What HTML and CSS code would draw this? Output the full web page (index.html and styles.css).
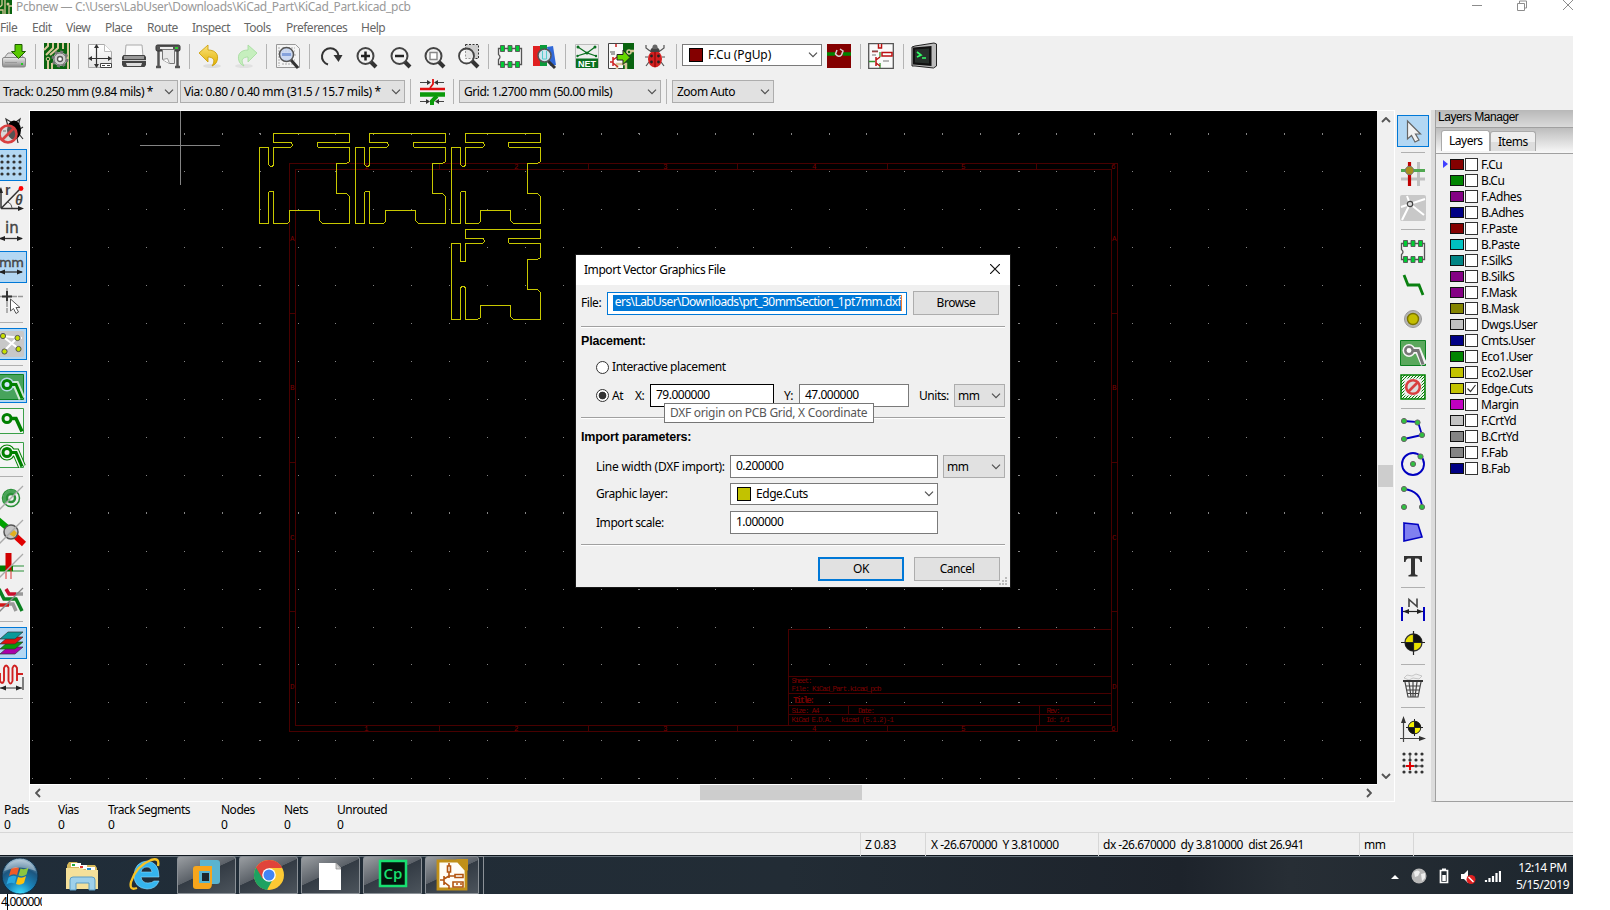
FILE: index.html
```html
<!DOCTYPE html>
<html lang="en">
<head>
<meta charset="utf-8">
<title>Pcbnew</title>
<link rel="stylesheet" href="styles.css">
</head>
<body>
<svg class="defs" aria-hidden="true">
  <defs>
    <linearGradient id="metal" x1="0" y1="0" x2="0" y2="1"><stop offset="0" stop-color="#e8e8e8"/><stop offset="1" stop-color="#8a8a8a"/></linearGradient>
    <linearGradient id="sheen" x1="0" y1="0" x2="0" y2="1"><stop offset="0" stop-color="#fff"/><stop offset="1" stop-color="#e4e4e4"/></linearGradient>
    <linearGradient id="yel" x1="0" y1="0" x2="0" y2="1"><stop offset="0" stop-color="#fbe27a"/><stop offset="1" stop-color="#e0b000"/></linearGradient>
    <radialGradient id="orb" cx=".5" cy="1" r="1"><stop offset="0" stop-color="#3fe0ff"/><stop offset=".35" stop-color="#1a86bd"/><stop offset=".7" stop-color="#1c567f"/><stop offset="1" stop-color="#a9c3d4"/></radialGradient>
    <pattern id="hatch" width="3" height="3" patternUnits="userSpaceOnUse"><path d="M0 3L3 0" stroke="#008000"/></pattern>
    <path id="board" d="M259.5 147.5H268.5V164.500L270.500 166.500H272.500L273.500 164.500V147.500H290.500L292.500 145.500L291.500 142.500H273.500V133.500H349.500V142.500H317.500V146L318.500 147.500H349.500V161.500L346.500 163.500H336.500V193.500H346.500L349.500 196.500V223.500H322.500L319.500 220.500V210.500H289.500V221.500L287.500 223.500H273.500V191.500H269.500L268.500 193V223.500H259.500Z"/>
    <symbol id="glass" viewBox="0 0 26 26"><path d="M16 18l6 6" stroke="#333" stroke-width="4"/><circle cx="11.500" cy="13" r="8" fill="#f2f2f2" stroke="#444" stroke-width="2"/></symbol>
    <symbol id="chev" viewBox="0 0 10 6"><path d="M1 .7L5 4.700L9 .7" fill="none" stroke="#505050" stroke-width="1.200"/></symbol>
    <symbol id="fp" viewBox="0 0 26 26"><path d="M1.500 5.500h23v16h-23v-5q3-2.500 0-5z" fill="#f4f4f4" stroke="#555" stroke-width="1.300"/><g fill="#0c3" stroke="#555" stroke-width=".9"><path d="M3.500 2.500h4v6h-4zM11 2.500h4v6h-4zM18.500 2.500h4v6h-4zM3.500 18.500h4v6h-4zM11 18.500h4v6h-4zM18.500 18.500h4v6h-4z"/></g></symbol>
  </defs>
</svg>

<div class="app">
  <header class="titlebar">
    <svg class="appicon" viewBox="0 0 12 14"><path fill="#0a6410" d="M0 0h12v14H0z"/><path d="M2 0v5l-2 2M5 0v14M9 14V6h3M0 10h3v4" fill="none" stroke="#d8c89a" stroke-width="1.300"/><circle cx="8" cy="4" r="1.500" fill="#d8c89a"/></svg>
    <span class="caption">Pcbnew — C:\Users\LabUser\Downloads\KiCad_Part\KiCad_Part.kicad_pcb</span>
    <svg class="winctl" viewBox="0 0 104 14"><g fill="none" stroke="#8c8c8c"><path d="M0 5.500h10M45.500 3.500h7v7h-7zM47.500 3v-2h7v7h-2M91 0l10 10M101 0L91 10"/></g></svg>
  </header>
  <nav class="menubar"><span>File</span><span>Edit</span><span>View</span><span>Place</span><span>Route</span><span>Inspect</span><span>Tools</span><span>Preferences</span><span>Help</span></nav>

  <div class="toolbar">
    <i class="cell"><svg viewBox="0 0 26 26"><path d="M3 15l4-5h12l4 5z" fill="#ddd" stroke="#888"/><rect x="1.500" y="14.500" width="23" height="9.500" rx="1.500" fill="url(#metal)" stroke="#888"/><path d="M4 19.500h12" stroke="#999"/><path d="M20 20h2v2h-2z" fill="#2c2"/><path d="M14 1.500h7v7h3.500l-7 7-7-7H14z" fill="#58c800" stroke="#1c5a00"/></svg></i>
    <i class="sep"></i>
    <i class="cell"><svg viewBox="0 0 26 26"><path fill="#0a6410" d="M0 0h26v26H0z"/><g fill="none" stroke="#d8c89a" stroke-width="2"><path d="M4 0v3L0 7M9 0v5L2 12M14 0v5L6 12M19 0v6M24 0v26M4 17v9M8 20v6"/></g><circle cx="4" cy="16" r="1.800" fill="none" stroke="#d8c89a"/><circle cx="16" cy="16" r="7" fill="#bbb" stroke="#777" stroke-dasharray="2.800 2.700" stroke-width="3"/><circle cx="16" cy="16" r="6" fill="#d0d0d0" stroke="#777"/><circle cx="16" cy="16" r="2.500" fill="#fff" stroke="#555" stroke-width="1.300"/></svg></i>
    <i class="sep"></i>
    <i class="cell"><svg viewBox="0 0 26 26"><path d="M1.500 1.500h16l7 7v16h-23z" fill="url(#sheen)" stroke="#aaa"/><path d="M17.500 1.500v7h7" fill="#fff" stroke="#bbb"/><path d="M2 15.500h22M9.500 2v22" stroke="#333" stroke-width="1.200"/><path d="M9.500 1l-2.500 4h5zM9.500 25l-2.500-4h5zM1 15.500l4-2.500v5zM25 15.500l-4-2.500v5z" fill="#333"/><path d="M13.500 20.500h11v4h-11z" fill="#fff" stroke="#444"/><path d="M15 22.500h3m2 0h3" stroke="#444"/></svg></i>
    <i class="cell"><svg viewBox="0 0 26 26"><path d="M5 2h16l1 11H4z" fill="#fafafa" stroke="#aaa"/><path d="M2.500 12h21l1.500 2v8l-1.500 2h-21L1 22v-8z" fill="#444"/><path d="M3 13h20v3H3z" fill="#999"/><path d="M5 20h16l-1 3H6z" fill="#ddd"/><path d="M1 17.500h24" stroke="#ccc"/></svg></i>
    <i class="cell"><svg viewBox="0 0 26 26"><path d="M3.500 7v17M22.500 7v17M1 24h5M20 24h5" stroke="#555" stroke-width="2.500"/><rect x="1" y="2" width="24" height="6" rx="1.500" fill="#555" stroke="#333"/><path d="M5 5h13" stroke="#eee" stroke-width="2"/><path d="M20 4h3v2h-3z" fill="#3c3"/><path d="M7.500 6.500h12v14h-5l-7-4z" fill="#e8e8e8" stroke="#777"/><path d="M7.500 16.500l5-1 2 5" fill="#fff" stroke="#999"/></svg></i>
    <i class="sep"></i>
    <i class="cell"><svg viewBox="0 0 26 26"><ellipse cx="14" cy="23" rx="9" ry="2" fill="#ddd"/><path d="M1 10l9-8v5c8 0 11 5 9 11-1 3-3 4-5 5 4-6 1-9-4-9v5z" fill="url(#yel)" stroke="#c99a00" stroke-width=".8"/></svg></i>
    <i class="cell faded"><svg viewBox="0 0 26 26"><ellipse cx="12" cy="23" rx="9" ry="2" fill="#ddd"/><path d="M25 10l-9-8v5C8 7 5 12 7 18c1 3 3 4 5 5-4-6-1-9 4-9v5z" fill="#b8efae" stroke="#8ad480" stroke-width=".8"/></svg></i>
    <i class="sep"></i>
    <i class="cell"><svg viewBox="0 0 26 26"><path d="M1.500 1.500h19l4 4v19h-23z" fill="#f4f4f4" stroke="#999"/><path d="M4 4v19M7 5h13M7 8h13M7 12h14M7 17h13M7 21h12" stroke="#aaa" stroke-dasharray="2 1"/><path d="M16 17l7 8" stroke="#333" stroke-width="3"/><circle cx="11.500" cy="11.500" r="7" fill="#c4d4f0" fill-opacity=".85" stroke="#555" stroke-width="1.500"/><path d="M7 10h9v3H7z" fill="#85a2dc"/></svg></i>
    <i class="sep"></i>
    <i class="cell"><svg viewBox="0 0 26 26"><path d="M10 21.500a8.300 8.300 0 1 1 10.500-9" fill="none" stroke="#333" stroke-width="2"/><path d="M15.500 12h9l-4 7z" fill="#333"/></svg></i>
    <i class="cell"><svg viewBox="0 0 26 26"><g transform="translate(2)"><use href="#glass"/><path d="M7 13h9M11.500 8.500v9" stroke="#222" stroke-width="2.500"/></g></svg></i>
    <i class="cell"><svg viewBox="0 0 26 26"><g transform="translate(2)"><use href="#glass"/><path d="M7 13h9" stroke="#222" stroke-width="2.500"/></g></svg></i>
    <i class="cell"><svg viewBox="0 0 26 26"><g transform="translate(2)"><use href="#glass"/><path d="M8 9.500h7v7H8z" fill="#fff" stroke="#888" stroke-width="1.400"/></g></svg></i>
    <i class="cell"><svg viewBox="0 0 26 26"><path d="M11.500 1.500h13v14h-13z" fill="#ccc" stroke="#333" stroke-dasharray="2 1.500"/><g transform="translate(2)"><path d="M16 18l6 6" stroke="#333" stroke-width="4"/><circle cx="10.500" cy="13" r="7.500" fill="#fff" fill-opacity=".5" stroke="#444" stroke-width="1.800"/></g></svg></i>
    <i class="sep"></i>
    <i class="cell"><svg viewBox="0 0 26 26"><use href="#fp"/></svg></i>
    <i class="cell"><svg viewBox="0 0 26 26"><path d="M2 3h7v20H2z" fill="#e02020"/><path d="M9 2h7v21H9z" fill="#0a9a3a"/><path d="M16 4l6-1 3 19-6 1z" fill="#3068d8"/><path d="M17 18l7 7" stroke="#333" stroke-width="3"/><circle cx="13.500" cy="12.500" r="6.500" fill="#cfe4ee" stroke="#555" stroke-width="1.500"/><path d="M11.500 8v8h4V8" fill="none" stroke="#5cc"/></svg></i>
    <i class="sep"></i>
    <i class="cell"><svg viewBox="0 0 26 26"><path d="M1.500 1.500h23v23h-23z" fill="#eee" stroke="#bbb"/><path d="M4 4l9 6 8-6M3 13l10-3 9 3" fill="none" stroke="#0a7020" stroke-width="1.200"/><g fill="#0a7020"><circle cx="4" cy="4" r="1.500"/><circle cx="21" cy="4" r="1.500"/><circle cx="13" cy="10" r="1.500"/><circle cx="3.500" cy="13" r="1.200"/><circle cx="22" cy="13" r="1.200"/><path d="M2 15.500h22V25H2z"/></g><text x="13" y="23.500" text-anchor="middle" class="t-net">NET</text></svg></i>
    <i class="cell"><svg viewBox="0 0 26 26"><path d="M.5.5h25v25H.5z" fill="#fafafa" stroke="#444"/><path d="M15 0h11v26H15z" fill="#0a6410"/><path d="M9 26v-5h9v5M26 8h-3" fill="none" stroke="#d8c89a" stroke-width="2.500"/><circle cx="21" cy="9" r="2" fill="#0a6410" stroke="#d8c89a" stroke-width="1.500"/><path d="M8 1v3M2 19h3M5 14v9M5 17l4-3M5 20l5 4" fill="none" stroke="#c22" stroke-width="1.500"/><path d="M2 9h5M3 11h4" stroke="#555"/><path d="M9 11.500h6V7l7 7.500-7 7V17H9z" fill="#66d800" stroke="#222"/></svg></i>
    <i class="cell"><svg viewBox="0 0 26 26"><g stroke="#555" stroke-width="1.200" fill="none"><path d="M8 8L4 5V2M18 8l4-3V2M6 14H3M20 14h3M7 19l-3 4M19 19l3 4"/></g><ellipse cx="13" cy="16" rx="7" ry="8.500" fill="#d42020"/><path d="M8 9a5 5 0 0 1 10 0z" fill="#444"/><path d="M10.500 4a2.500 2.500 0 0 1 5 0v2h-5z" fill="#666"/><path d="M13 9v15" stroke="#700"/><g fill="#222"><circle cx="9.500" cy="13" r="1.400"/><circle cx="16.500" cy="13" r="1.400"/><circle cx="9.500" cy="19" r="1.400"/><circle cx="16.500" cy="19" r="1.400"/></g></svg></i>
    <i class="sep"></i>
    <div class="combo layer-combo"><b class="chip fcu"></b><span>F.Cu (PgUp)</span><svg class="chev"><use href="#chev"/></svg></div>
    <i class="cell"><svg viewBox="0 0 26 26"><path fill="#840000" d="M1 1h24v24H1z"/><path d="M1 11h8M17 11h8" stroke="#008400" stroke-width="3.500"/><path d="M11 7l-1.500 4q3 4 6 1l1.500-4-3-2" fill="none" stroke="#d8d0d0" stroke-width="1.500"/></svg></i>
    <i class="sep"></i>
    <i class="cell shift"><svg viewBox="0 0 26 26"><path d="M.7.7h24.600v24.600H.7z" fill="#fafafa" stroke="#555" stroke-width="1.300"/><path d="M12 1v4M12 9v5M12 20v5M1 18.500h6" stroke="#393" stroke-width="1.300"/><g fill="#fff" stroke="#b11" stroke-width="1.500"><path d="M10.500 1v4h3V1M14 9.500h10v3.500H14z"/></g><path d="M8 14v9M8 17l4-3M8 20l4 3M4 8.500h6" stroke="#b11" stroke-width="1.500"/><path d="M4 8h6M15 18h6M4 12h4" stroke="#777"/></svg></i>
    <i class="sep"></i>
    <i class="cell shift"><svg viewBox="0 0 26 26"><path d="M4 3l19-3 2.500 1v22l-3 2L4 23H1V4z" fill="#bbb" stroke="#222"/><path d="M2 4.500L20.500 3v20L2 21.500z" fill="#111"/><path d="M4 6.500l14-1v15l-14-1z" fill="#28302c"/><path d="M6 9l4 3-4 2" fill="none" stroke="#3f6" stroke-width="1.700"/><path d="M11 15h4" stroke="#3f6" stroke-width="1.500"/></svg></i>
  </div>

  <div class="toolbar second">
    <div class="combo gray c-track"><span>Track: 0.250 mm (9.84 mils) *</span><svg class="chev"><use href="#chev"/></svg></div>
    <div class="combo gray c-via"><span>Via: 0.80 / 0.40 mm (31.5 / 15.7 mils) *</span><svg class="chev"><use href="#chev"/></svg></div>
    <i class="sep"></i>
    <i class="cell"><svg viewBox="0 0 26 26"><path d="M1 10h25" stroke="#e01010" stroke-width="2.500"/><path d="M1 15.500h25" stroke="#0a9a0a" stroke-width="4.500"/><path d="M14 0v5l-3 4" stroke="#e01010" stroke-width="1.800" fill="none"/><path d="M13 26v-4l5-5" stroke="#0a9a0a" stroke-width="4" fill="none"/><path d="M1 3.500h9M25 3.500h-9M1 22.500h8M25 22.500h-8" stroke="#444"/><path d="M12 3.500L8 1v5zM15 3.500L19 1v5zM11 22.500L7 20v5zM16 22.500l4-2.500v5z" fill="#333"/></svg></i>
    <i class="sep"></i>
    <div class="combo gray c-grid"><span>Grid: 1.2700 mm (50.00 mils)</span><svg class="chev"><use href="#chev"/></svg></div>
    <i class="sep"></i>
    <div class="combo gray c-zoom"><span>Zoom Auto</span><svg class="chev"><use href="#chev"/></svg></div>
  </div>

  <main class="work">
    <aside class="vbar left">
      <i class="cell"><svg viewBox="0 0 26 26"><path d="M10 8L8 1l5 3M20 8l2-7-4 3M8 13H5M22 11l3-2M21 16l4 5M19 20l1 5" fill="none" stroke="#333" stroke-width="1.200"/><ellipse cx="16" cy="12" rx="7" ry="9.500" fill="#000"/><circle cx="10" cy="16" r="8.500" fill="#bbb" fill-opacity=".45" stroke="#d84040" stroke-width="2.600"/><path d="M4 22L16 10" stroke="#d84040" stroke-width="2.600"/></svg></i>
      <i class="cell on"><svg viewBox="0 0 26 26"><path d="M4 4h19M4 10h19M4 16h19M4 22h19" fill="none" stroke="#333" stroke-width="3.200" stroke-linecap="round" stroke-dasharray="0 6"/></svg></i>
      <i class="cell"><svg viewBox="0 0 26 26"><path d="M3 22.500h18M3 22.500V4M3 22.500L22 3" stroke="#333" stroke-width="1.500"/><path d="M3 1L0 7h5zM26 22.500l-6-2.500v5z" fill="#222"/><circle cx="23" cy="2.500" r="2.400" fill="red"/><path d="M10 16q4 2 4 6" fill="none" stroke="#555"/><text x="7" y="9" class="t-pol">r</text><text x="17" y="19" class="t-pol it">θ</text></svg></i>
      <i class="cell"><svg viewBox="0 0 26 26"><text x="7" y="13" class="t-unit">in</text><path d="M2 18.500h22" stroke="#333" stroke-width="1.300"/><path d="M25 18.500l-6-2.500v5zM1 18.500l6-2.500v5z" fill="#222"/></svg></i>
      <i class="cell on"><svg viewBox="0 0 26 26"><text x="1" y="13" class="t-unit mm">mm</text><path d="M2 18h22" stroke="#333" stroke-width="1.300"/><path d="M25 18l-6-2.500v5zM1 18l6-2.500v5z" fill="#222"/></svg></i>
      <i class="cell"><svg viewBox="0 0 26 26"><path d="M0 8.500h25M9 0v25" stroke="#999" stroke-width="1.500" stroke-dasharray="9 1"/><path d="M4 8.500h10M9 3v10" stroke="#333" stroke-width="2"/><path d="M12.500 11v12l3-2.500 2.500 5 2.500-1.500-2.500-4.500h4z" fill="#fff" stroke="#555"/></svg></i>
      <i class="sep"></i>
      <i class="cell on"><svg viewBox="0 0 26 26"><rect width="26" height="26" rx="2" fill="#c8c8c8"/><path d="M4 5l20 2M4 5l17 13M19 7L6 20" stroke="#fff" stroke-width="2.200"/><g fill="#c8e000" stroke="#555"><circle cx="5" cy="5" r="2.600"/><circle cx="19.500" cy="7" r="2.600"/><circle cx="6.500" cy="20.500" r="2.600"/><circle cx="20.500" cy="18" r="2.600"/></g></svg></i>
      <i class="sep"></i>
      <i class="cell on"><svg viewBox="0 0 26 26"><path d="M0 .5h25.500v25H0z" fill="#47a35c" stroke="#0a8020"/><path d="M9 10.500h9l6 14" fill="none" stroke="#fff" stroke-opacity=".75" stroke-width="7"/><circle cx="9" cy="10.500" r="7" fill="#b5d8e8"/><path d="M9 10.500h9l6 14" fill="none" stroke="#008000" stroke-width="3"/><circle cx="9" cy="10.500" r="4" fill="#cfe8ff" stroke="#008000" stroke-width="3"/></svg></i>
      <i class="cell"><svg viewBox="0 0 26 26"><path d="M0 .5h25.500v25H0" fill="#f4f4f4" stroke="#3aa048"/><path d="M9 10.500h9l6 13" fill="none" stroke="#008000" stroke-width="3.500"/><circle cx="9" cy="10.500" r="4" fill="#f4f4f4" stroke="#008000" stroke-width="3"/></svg></i>
      <i class="cell"><svg viewBox="0 0 26 26"><path d="M0 .5h25.500v25H0" fill="#f4f4f4" stroke="#3aa048"/><path d="M9 10.500h9l6 14" fill="none" stroke="#008000" stroke-width="8"/><circle cx="9" cy="10.500" r="7.500" fill="#f4f4f4" stroke="#008000" stroke-width="1.200"/><path d="M9 10.500h9l6 14" fill="none" stroke="#f4f4f4" stroke-width="6"/><path d="M9 10.500h9l6 14" fill="none" stroke="#008000" stroke-width="3.200"/><circle cx="9" cy="10.500" r="4" fill="#f4f4f4" stroke="#008000" stroke-width="3"/></svg></i>
      <i class="sep"></i>
      <i class="cell"><svg viewBox="0 0 26 26"><circle cx="13" cy="13" r="8.500" fill="#eee" stroke="#2a9038" stroke-width="1.500"/><path d="M7 19A8.500 8.500 0 0 1 19 7z" fill="#4aa458"/><circle cx="13" cy="13" r="4" fill="#eee" stroke="#2a9038" stroke-width="2.500"/><path d="M1 25L25 1" stroke="#aaa" stroke-width="1.300"/></svg></i>
      <i class="cell"><svg viewBox="0 0 26 26"><path d="M0 1l12 10" stroke="#00a000" stroke-width="6"/><path d="M13 13l13 12" stroke="#e00000" stroke-width="6"/><circle cx="13" cy="13" r="7" fill="#c4c4c4" stroke="#555" stroke-width="1.500"/><path d="M11 15l5-4 3 3-3 4z" fill="#e0b020"/><path d="M1 25L25 1" stroke="#aaa" stroke-width="1.300"/></svg></i>
      <i class="cell"><svg viewBox="0 0 26 26"><path d="M0 15.500h15" stroke="#008000" stroke-width="6"/><path d="M10.500 0v17" stroke="#d00000" stroke-width="6"/><path d="M15 13h11M15 18h11" stroke="#2a9038"/><path d="M8 17v9M13 17v9" stroke="#d33"/><path d="M1 25L25 1" stroke="#aaa" stroke-width="1.300"/></svg></i>
      <i class="cell"><svg viewBox="0 0 26 26"><path d="M8 2l3 5h7" fill="none" stroke="#c8102e" stroke-width="3.500"/><path d="M18 7h7M11 17h4l3 7" fill="none" stroke="#999" stroke-width="3.500"/><path d="M0 18h11" stroke="#d01818" stroke-width="3.500"/><path d="M1 2l5 10h12l6 12" fill="none" stroke="#0a8020" stroke-width="3.500"/><path d="M1 25L25 1" stroke="#888" stroke-width="1.300"/></svg></i>
      <i class="sep"></i>
      <i class="cell on"><svg viewBox="0 0 26 26"><g stroke="#333" stroke-width=".7"><path d="M2 24l8-7h15l-8 7z" fill="#a0a"/><path d="M2 19l8-7h15l-8 7z" fill="#0a9a0a"/><path d="M2 14l8-7h15l-8 7z" fill="#e01010"/><path d="M2 9l8-7h15l-8 7z" fill="#0a9a9a"/></g></svg></i>
      <i class="cell"><svg viewBox="0 0 26 26"><path d="M0 10h2v7q2 4 4 0M6 17V4q2-5 4.500 0v13q2 5 4 0V4q2-5 4.500 0v13M19 10h6" fill="none" stroke="#d02020" stroke-width="1.900"/><path d="M2 24h22M25 13v13" stroke="#333" stroke-width="1.200"/><path d="M24 24l-6-2.500v5zM2 24l6-2.500v5z" fill="#222"/></svg></i>
      <i class="sep"></i>
    </aside>

    <section class="view">
      <svg class="pcb" viewBox="30 111 1347 673">
        <path class="dots" d="M32 133.500H1377M32 171.500H1377M32 209.500H1377M32 247.500H1377M32 285.500H1377M32 323.500H1377M32 361.500H1377M32 399.500H1377M32 437.500H1377M32 475.500H1377M32 513.500H1377M32 551.500H1377M32 589.500H1377M32 627.500H1377M32 664.500H1377M32 702.500H1377M32 740.500H1377M32 778.500H1377"/>
        <path class="dots ten" d="M259 133.500H1377M259 171.500H1377M259 209.500H1377M259 247.500H1377M259 285.500H1377M259 323.500H1377M259 361.500H1377M259 399.500H1377M259 437.500H1377M259 475.500H1377M259 513.500H1377M259 551.500H1377M259 589.500H1377M259 627.500H1377M259 664.500H1377M259 702.500H1377M259 740.500H1377M259 778.500H1377"/>
        <path class="dots" d="M32 134.500H1377M32 512.500H1377"/>
        <g class="frame">
          <path d="M289.500 163.500H1117.500V731.500H289.500ZM295.500 169.500H1111.500V725.500H295.500Z"/>
          <path d="M439.500 163v6M588.500 163v6M737.500 163v6M887.500 163v6M1036.500 163v6M439.500 725v6M588.500 725v6M737.500 725v6M887.500 725v6M1036.500 725v6M289 313.500h6M289 462.500h6M289 611.500h6M1111 313.500h6M1111 462.500h6M1111 611.500h6"/>
          <path d="M788.500 725V629.500H1111M788 676.500h323M788 693.500h323M788 705.500h323M788 714.500h323M848.500 705v9M1039.500 705v20"/>
        </g>
        <g class="frametext">
          <text x="364" y="169">1</text><text x="514" y="169">2</text><text x="663" y="169">3</text><text x="812" y="169">4</text><text x="961" y="169">5</text><text x="1111" y="169">6</text>
          <text x="364" y="731">1</text><text x="514" y="731">2</text><text x="663" y="731">3</text><text x="812" y="731">4</text><text x="961" y="731">5</text><text x="1111" y="731">6</text>
          <text x="290" y="241">A</text><text x="290" y="390">B</text><text x="290" y="540">C</text><text x="290" y="689">D</text>
          <text x="1112" y="241">A</text><text x="1112" y="390">B</text><text x="1112" y="540">C</text><text x="1112" y="689">D</text>
          <text x="791.500" y="683" textLength="21">Sheet:</text>
          <text x="791.500" y="691" textLength="90">File: KiCad_Part.kicad_pcb</text>
          <text x="793" y="702.500" textLength="22" class="big">Title:</text>
          <text x="791.500" y="713" textLength="28">Size: A4</text><text x="858" y="713" textLength="17">Date:</text><text x="1046.500" y="713" textLength="14">Rev:</text>
          <text x="791.500" y="721.500" textLength="41">KiCad E.D.A.</text><text x="841" y="721.500" textLength="53">kicad (5.1.2)-1</text><text x="1046" y="721.500" textLength="24">Id: 1/1</text>
        </g>
        <g class="edge"><use href="#board"/><use href="#board" x="96"/><path d="M451.500 147.500H460.500V164.500L462.500 166.500H464.500L465.500 164.500V147.500H482.500L484.500 145.500L483.500 142.500H465.500V133.500H540.500V142.500H508.500V146L509.500 147.500H540.500V161.500L537.500 163.500H527.500V193.500H537.500L540.500 196.500V223.500H513.500L510.500 220.500V210.500H480.500V221.500L478.500 223.500H465.500V191.500H461.500L460.500 193V223.500H451.500Z"/><path transform="translate(0 96)" d="M451.500 147.500H460.500V165.500H465.500V147.500H482.500L484.500 145.500L483.500 142.500H465.500V133.500H540.500V142.500H508.500V146L509.500 147.500H540.500V161.500L537.500 163.500H527.500V193.500H537.500L540.500 196.500V223.500H513.500L510.500 220.500V209.500H480.500V221.500L477.500 223.500H465.500V191.500L463.500 190.500H461.500L460.500 192.500V223.500H451.500Z"/></g>
        <path class="cross" d="M180.500 111V185M140 145.500H220"/>
      </svg>
      <div class="vscroll"><svg viewBox="0 0 10 6"><path d="M1 5L5 1l4 4" /></svg><b class="thumb"></b><svg viewBox="0 0 10 6"><path d="M1 1l4 4 4-4"/></svg></div>
      <div class="hscroll"><svg viewBox="0 0 6 10"><path d="M5 1L1 5l4 4"/></svg><b class="thumb"></b><svg viewBox="0 0 6 10"><path d="M1 1l4 4-4 4"/></svg></div>
      <i class="corner"></i>
    </section>

    <aside class="vbar right">
      <i class="cell on"><svg viewBox="0 0 26 26"><path d="M7.500 3v18l4-3.500 3.500 6.500 4-2-3.500-6h5z" fill="#f2f2f2" stroke="#666" stroke-width="1.200"/></svg></i>
      <i class="sep"></i>
      <i class="cell"><svg viewBox="0 0 26 26"><path d="M18.500 1v24M1 18h24" stroke="#c0c0c0" stroke-width="3"/><path d="M1 9.500h24" stroke="#50a850" stroke-width="3"/><path d="M9.500 1v24" stroke="#c00000" stroke-width="3.200"/><circle cx="9.500" cy="9.500" r="4.200" fill="#a89020" stroke="#777"/></svg></i>
      <i class="cell"><svg viewBox="0 0 26 26"><rect width="26" height="26" rx="2" fill="#c8c8c8"/><path d="M7 1l3 8 15-5M10 9L1 12M10 9L2 25M10 9l14 11" stroke="#fff" stroke-width="2" fill="none"/><circle cx="10" cy="9" r="2.700" fill="#ddd" stroke="#444" stroke-width="1.200"/></svg></i>
      <i class="sep"></i>
      <i class="cell"><svg viewBox="0 0 26 26"><use href="#fp"/></svg></i>
      <i class="cell"><svg viewBox="0 0 26 26"><path d="M4 3l4 10h11l4 10" fill="none" stroke="#0a8010" stroke-width="2.800"/></svg></i>
      <i class="cell"><svg viewBox="0 0 26 26"><circle cx="13" cy="13" r="8.500" fill="#b4b4b4" stroke="#999"/><circle cx="13" cy="13" r="5.500" fill="#c4be00" stroke="#7a7400" stroke-width="1.400"/></svg></i>
      <i class="cell"><svg viewBox="0 0 26 26"><path d="M.5.5h25v25H.5z" fill="#5aa85c" stroke="#0a8020"/><path d="M9 10.500h9l6 14" fill="none" stroke="#f4f4f4" stroke-width="6.500"/><circle cx="9" cy="10.500" r="6.500" fill="#f4f4f4"/><path d="M9 10.500h9l5 14" fill="none" stroke="#777" stroke-width="3"/><circle cx="9" cy="10.500" r="3.700" fill="#fff" stroke="#777" stroke-width="2.500"/></svg></i>
      <i class="cell"><svg viewBox="0 0 26 26"><path d="M1 1h24v24H1z" fill="url(#hatch)" stroke="#008000" stroke-width="1.500"/><path d="M4.500 4.500h17v17h-17z" fill="#f0f0f0"/><circle cx="13" cy="13" r="6.800" fill="#ddd" stroke="#d84040" stroke-width="2.600"/><path d="M8.500 17.500l9-9" stroke="#d84040" stroke-width="2.600"/></svg></i>
      <i class="sep"></i>
      <i class="cell"><svg viewBox="0 0 26 26"><path d="M4 4l14 1 4 13-18 4" fill="none" stroke="#0000c0" stroke-width="1.800"/><g class="node"><circle cx="4" cy="4" r="2.600"/><circle cx="17.500" cy="5.500" r="2.600"/><circle cx="22" cy="18" r="2.600"/><circle cx="4" cy="22" r="2.600"/></g></svg></i>
      <i class="cell"><svg viewBox="0 0 26 26"><circle cx="13" cy="13" r="11" fill="none" stroke="#0000c0" stroke-width="1.900"/><g class="node"><circle cx="13" cy="13" r="2.600"/><circle cx="20.500" cy="5.500" r="2.600"/></g></svg></i>
      <i class="cell"><svg viewBox="0 0 26 26"><path d="M4 4q17 2 18 18" fill="none" stroke="#0000c0" stroke-width="1.800"/><g class="node"><circle cx="4" cy="4" r="2.600"/><circle cx="22" cy="22" r="2.600"/><circle cx="4" cy="22" r="2.600"/></g></svg></i>
      <i class="cell"><svg viewBox="0 0 26 26"><path d="M4 4l14 1.500 4 12.500L4 22z" fill="#8080f0" stroke="#0000c0" stroke-width="1.600"/></svg></i>
      <i class="cell"><svg viewBox="0 0 26 26"><path d="M4 3h18v6h-1.500q-.5-3.500-3-3.500h-2.500v15q0 1.500 2.500 1.500v1.500h-9V22q2.500 0 2.500-1.500v-15H8.500q-2.500 0-3 3.500H4z" fill="#333"/></svg></i>
      <i class="sep"></i>
      <i class="cell"><svg viewBox="0 0 26 26"><path d="M2 11v14M24 11v14" stroke="#0000c0" stroke-width="2"/><path d="M3 15.500h20" stroke="#222" stroke-width="1.200"/><path d="M3 15.500l6-2.500v5zM23 15.500l-6-2.500v5z" fill="#222"/><path d="M9 11V3.500l8 7V2.500" fill="none" stroke="#444" stroke-width="1.600"/></svg></i>
      <i class="cell"><svg viewBox="0 0 26 26"><circle cx="13.500" cy="12.500" r="8.500" fill="#e8e000" stroke="#333" stroke-width="1.300"/><path d="M13.500 12.500V4a8.500 8.500 0 0 1 8.500 8.500zM13.500 12.500V21A8.500 8.500 0 0 1 5 12.500z" fill="#111"/><path d="M1 12.500h24M13.500 1v24" stroke="#222" stroke-width="1.200"/></svg></i>
      <i class="sep"></i>
      <i class="cell"><svg viewBox="0 0 26 26"><path d="M4 5l3-3 5 1 4-2 6 2-3 3-6-1-4 2z" fill="#eee" stroke="#bbb" stroke-width=".8"/><path d="M3 8h20" stroke="#333" stroke-width="2"/><path d="M5 9l3 15h10l3-15M9 9l2 15M13 9v15M17 9l-2 15M5.500 13h15M6 17h14M7 20.500h12" fill="none" stroke="#444" stroke-width="1.200"/></svg></i>
      <i class="sep"></i>
      <i class="cell"><svg viewBox="0 0 26 26"><path d="M3.500 26V3M0 22.500h22" stroke="#444" stroke-width="1.200"/><path d="M3.500 0L1 7h5zM26 22.500l-7-2.500v5z" fill="#333"/><circle cx="14.500" cy="11.500" r="6.300" fill="#f4f000" stroke="#222"/><path d="M14.500 11.500V5.200a6.300 6.300 0 0 1 6.300 6.300zM14.500 11.500v6.300a6.300 6.300 0 0 1-6.300-6.300z" fill="#111"/><path d="M6 11.500h17M14.500 3v17" stroke="#222"/></svg></i>
      <i class="cell"><svg viewBox="0 0 26 26"><path d="M4 4h19M4 10h19M4 16h19M4 22h19" stroke="#333" stroke-width="3.200" stroke-linecap="round" stroke-dasharray="0 6"/><path d="M10 4v12h12" fill="none" stroke="#444" stroke-width="1"/><path d="M6 16h8M10 12v8" stroke="#e00000" stroke-width="2"/></svg></i>
    </aside>

    <aside class="manager">
      <h2>Layers Manager</h2>
      <div class="tabs"><span class="tab active">Layers</span><span class="tab">Items</span></div>
      <ul>
        <li class="current"><b class="red"></b><i></i>F.Cu</li>
        <li><b class="green"></b><i></i>B.Cu</li>
        <li><b class="purple"></b><i></i>F.Adhes</li>
        <li><b class="navy"></b><i></i>B.Adhes</li>
        <li><b class="red"></b><i></i>F.Paste</li>
        <li><b class="cyan"></b><i></i>B.Paste</li>
        <li><b class="teal"></b><i></i>F.SilkS</li>
        <li><b class="purple"></b><i></i>B.SilkS</li>
        <li><b class="purple"></b><i></i>F.Mask</li>
        <li><b class="olive"></b><i></i>B.Mask</li>
        <li><b class="silver"></b><i></i>Dwgs.User</li>
        <li><b class="navy"></b><i></i>Cmts.User</li>
        <li><b class="green"></b><i></i>Eco1.User</li>
        <li><b class="yellow"></b><i></i>Eco2.User</li>
        <li><b class="yellow"></b><i><svg viewBox="0 0 11 11"><path d="M1.500 5.500l3 3 5-6.500"/></svg></i>Edge.Cuts</li>
        <li><b class="magenta"></b><i></i>Margin</li>
        <li><b class="silver"></b><i></i>F.CrtYd</li>
        <li><b class="gray"></b><i></i>B.CrtYd</li>
        <li><b class="gray"></b><i></i>F.Fab</li>
        <li><b class="navy"></b><i></i>B.Fab</li>
      </ul>
    </aside>
  </main>

  <section class="messages">
    <p>Pads<br>0</p><p>Vias<br>0</p><p>Track Segments<br>0</p><p>Nodes<br>0</p><p>Nets<br>0</p><p>Unrouted<br>0</p>
  </section>
  <footer class="status"><span></span><span>Z 0.83</span><span>X -26.670000&nbsp; Y 3.810000</span><span>dx -26.670000&nbsp; dy 3.810000&nbsp; dist 26.941</span><span>mm</span><span></span></footer>

  <div class="taskbar">
    <svg class="start" viewBox="0 0 40 39"><circle cx="20" cy="20" r="18" fill="url(#orb)" stroke="#0d2c44"/><path d="M11 13q4-3 8-1l-2 7q-4-2-8 1z" fill="#f05a28"/><path d="M20.500 12.500q4 2 8-1l-2 7q-4 3-8 1z" fill="#8cc63f"/><path d="M8.500 21.500q4-3 8-1l-2 7q-4-2-8 1z" fill="#29a8e0"/><path d="M18 21q4 2 8-1l-2 7q-4 3-8 1z" fill="#ffc20e"/><path d="M4 15a17 17 0 0 1 32 0q-16-7-32 0z" fill="#fff" opacity=".35"/></svg>
    <svg class="pin folder" viewBox="0 0 34 32"><path d="M2 5l2-3h8l2 3h16l2 3v20H2z" fill="#d6b85a"/><path d="M6 3h10v4H6z" fill="#fff"/><path d="M7 4h3v2H7z" fill="#2a4"/><path d="M14 5h8v4h-8z" fill="#fff"/><path d="M15 6h3v2h-3z" fill="#d33"/><path d="M21 7h9v4h-9z" fill="#fff"/><path d="M22 8h4v2h-4z" fill="#28c"/><path d="M1 8h16l2 2h14v19H1z" fill="#f4e09a"/><path d="M5 30V20q0-3 3-3h19q3 0 3 3v10h-6v-7H11v7z" fill="#9ed0ea" stroke="#5a9cc4"/></svg>
    <svg class="pin ie" viewBox="0 0 32 32"><path d="M30 19H12q1 6 7 6 4 0 6-2h5q-3 8-12 8Q5 30 5 17 6 4 18 3q12 1 12 16zM12 14h11q-1-5-5-5-5 0-6 5z" fill="#35b4ee" stroke="#8fdcff" stroke-width=".6"/><path d="M8 30Q0 33 2 24 7 8 22 2q9-3 7 6" fill="none" stroke="#f7c325" stroke-width="2.400"/></svg>
    <div class="task"><svg viewBox="0 0 32 32"><path d="M9 1h17q3 0 3 3v18q0 3-3 3H9z" fill="#5ab4d0"/><path d="M2 10q0-3 3-3h16v17q0 6-4 6H5q-3 0-3-3z" fill="#f7a51c"/><path d="M8 12h11v12H8z" fill="#5ab4d0"/><path d="M11 14h7v8h-7z" fill="#1d262c"/></svg></div>
    <div class="task"><svg viewBox="0 0 32 32"><circle cx="16" cy="16" r="15" fill="#fcc934"/><path d="M16 16L3 8.500A15 15 0 0 0 14 31l6-11z" fill="#1da261"/><path d="M16 16V9h13.300A15 15 0 0 0 3 8.500l6.500 11z" fill="#e0443a"/><circle cx="16" cy="16" r="6.800" fill="#fff"/><circle cx="16" cy="16" r="5.500" fill="#4285f4"/></svg></div>
    <div class="task"><svg viewBox="0 0 32 32"><path d="M4 4h17l5 5v22H4z" fill="#fff"/><path d="M21 4l5 6h-5z" fill="#ccc" stroke="#888" stroke-width=".7"/></svg></div>
    <div class="task"><svg viewBox="0 0 32 32"><path d="M3 2h26v25H3z" fill="#04140c" stroke="#17e070" stroke-width="2.500"/><text x="16" y="20" text-anchor="middle" class="t-cp">Cp</text></svg></div>
    <div class="task last"><svg viewBox="0 0 32 32"><path d="M2 2h20l8 9v19H2z" fill="#fffdf6" stroke="#c09018" stroke-width="2.800"/><path d="M20 0h12v12z" fill="#c09018"/><g fill="none" stroke="#b35410" stroke-width="1.600"><path d="M13 4v3M11.500 7h3v6h-3zM13 13v6M13 17h6M19 15.500h8v3h-8zM4 21h4M8 17v9M8 20l5-3M8 23l5 4v3M17 23h10v5H17zM20 25h2m2 0h2"/></g></svg></div>
    <i class="sliver"></i>
    <div class="tray">
      <svg viewBox="0 0 110 20"><path d="M0 13l4-4 4 4z" fill="#fff"/><circle cx="28" cy="10" r="7.500" fill="#b8b8b8"/><path d="M23 6q4-3 6 0l-2 4-3 1zM30 8l4-1v5l-3 3z" fill="#eee"/><path d="M49.500 4.500h7v12h-7z" fill="none" stroke="#fff" stroke-width="1.700"/><path d="M51 2.500h4v2h-4zM51.300 9h3.500v6h-3.500z" fill="#fff"/><path d="M70 8h3l4-4v13l-4-4h-3z" fill="#fff"/><circle cx="80" cy="13.500" r="4.500" fill="#e02020"/><path d="M77.500 11l5 5" stroke="#fff" stroke-width="1.500"/><path d="M95 16v-2M98.500 16v-4M102 16v-6M105.500 16V7M109 16V5" stroke="#fff" stroke-width="2.200"/></svg>
      <p>12:14 PM<br>5/15/2019</p>
    </div>
  </div>

  <section class="dialog">
    <header><span>Import Vector Graphics File</span><svg viewBox="0 0 10 10"><path d="M0 0l10 10M10 0L0 10" stroke="#111" stroke-width="1.200"/></svg></header>
    <div class="row r-file"><label>File:</label><div class="field focus"><mark><span>ers\LabUser\Downloads\prt_30mmSection_1pt7mm.dxf</span></mark></div><button>Browse</button></div>
    <hr>
    <h3>Placement:</h3>
    <div class="row r-inter"><i class="radio"></i><span>Interactive placement</span></div>
    <div class="row r-at"><i class="radio sel"></i><span class="at">At</span><label>X:</label><div class="field hot">79.000000</div><label class="y">Y:</label><div class="field yv">47.000000</div><label class="u">Units:</label><div class="combo gray"><span>mm</span><svg class="chev"><use href="#chev"/></svg></div></div>
    <hr class="h2">
    <h3 class="p2">Import parameters:</h3>
    <div class="row param"><label class="wide">Line width (DXF import):</label><div class="field">0.200000</div><div class="combo gray"><span>mm</span><svg class="chev"><use href="#chev"/></svg></div></div>
    <div class="row param g"><label>Graphic layer:</label><div class="combo"><b class="chip"></b><span>Edge.Cuts</span><svg class="chev"><use href="#chev"/></svg></div></div>
    <div class="row param s"><label>Import scale:</label><div class="field">1.000000</div></div>
    <hr class="h3">
    <div class="row actions"><button class="ok">OK</button><button>Cancel</button></div>
    <svg class="grip" viewBox="0 0 8 8"><path d="M6 0h2v2H6zM3 3h2v2H3zM6 3h2v2H6zM0 6h2v2H0zM3 6h2v2H3zM6 6h2v2H6z" fill="#bbb"/></svg>
    <div class="tooltip">DXF origin on PCB Grid, X Coordinate</div>
  </section>
</div>
<div class="stray">4.000000</div>
</body>
</html>
```
FILE: styles.css
```css
* { box-sizing: border-box; }
body { margin: 0; width: 1610px; height: 910px; overflow: hidden; background: #fff; font: 12px/15px "Noto Sans", "Open Sans", sans-serif; letter-spacing: -.5px; color: #000; white-space: nowrap; }
p, h2, h3, ul { margin: 0; padding: 0; }
i { font-style: normal; }
.defs { position: absolute; width: 0; height: 0; }
.app { position: relative; width: 1573px; height: 894px; background: #f0f0f0; }

.titlebar { display: flex; height: 18px; background: #fff; color: #999; line-height: 14px; }
.appicon { width: 12px; height: 14px; margin-right: 4px; }
.caption { flex: 1; letter-spacing: -.33px; }
.winctl { width: 104px; height: 14px; margin: 0 -3px 0 0; }
.menubar { display: grid; grid-template-columns: 32px 34px 39px 42px 45px 52px 42px 75px 40px; height: 18px; line-height: 19px; background: #fff; color: #666; }

.toolbar { display: flex; align-items: center; height: 40px; margin-left: -3px; }
.cell { display: grid; place-items: center; flex: 0 0 34px; height: 34px; }
.cell svg { width: 26px; height: 26px; overflow: visible; }
.cell.shift svg { margin-right: 2px; }
.faded { opacity: .75; }
.toolbar .sep { flex: 0 0 9px; height: 25px; background: linear-gradient(#b4b4b4, #b4b4b4) 4px 0 / 1px 100% no-repeat; }
.second { height: 34px; margin-left: 0; padding-bottom: 3px; }
.combo { display: flex; align-items: center; height: 23px; padding: 0 3px 0 4px; border: 1px solid #7a7a7a; background: #fff; }
.combo span { flex: 1; }
.combo.gray { border-color: #adadad; background: #e1e1e1; }
.chev { width: 10px; height: 6px; }
.layer-combo { width: 140px; height: 22px; margin: -3px 0 0 1px; padding: 0 3px 0 6px; letter-spacing: -.1px; }
.chip { width: 14px; height: 14px; margin-right: 5px; border: 1px solid #000; background: #c2c200; }
.chip.fcu { background: #840000; }
.c-track { width: 179px; margin-left: -1px; padding-left: 3px; letter-spacing: -.43px; }
.c-via { width: 225px; margin: 0 1px 0 2px; padding-left: 3px; letter-spacing: -.38px; }
.c-grid { width: 202px; margin: 0 1px; letter-spacing: -.45px; }
.c-zoom { width: 102px; margin-left: 1px; }

.work { display: grid; grid-template-columns: 29px 1366px 36px 142px; height: 692px; }
.vbar { padding-top: 4px; }
.vbar .cell { width: 32px; }
.vbar.left .cell { margin-left: -5px; }
.vbar.right .cell { margin-left: 2px; }
.vbar .sep { display: block; height: 9px; background: linear-gradient(#b0b0b0, #b0b0b0) 0 4px / 23px 1px no-repeat; }
.vbar.right .sep { margin-left: 6px; background-size: 24px 1px; }
.vbar .on { height: 32px; margin-top: 1px; margin-bottom: 1px; border: 1px solid #0078d7; background: #b3d7f3; }
.node circle { fill: #30c040; stroke: #666; stroke-width: 1; }
.view { display: grid; grid-template-columns: 1347px 17px; grid-template-rows: 673px 17px; border: 1px solid #fff; }
.pcb { width: 1347px; height: 673px; background: #000; }
.pcb path, .pcb use { fill: none; shape-rendering: crispEdges; }
.dots { stroke: #848484; stroke-dasharray: 1 36.930; }
.ten { stroke-dasharray: 2 377.300; }
.frame { stroke: #480000; }
.frametext { fill: #7c0000; font: 7.500px "Liberation Mono", monospace; letter-spacing: 0; }
.frametext .big { font-size: 9px; font-weight: bold; }
.edge { stroke: #c8c800; }
.cross { stroke: #848484; }
.vscroll, .hscroll { display: flex; align-items: center; justify-content: space-between; }
.vscroll { flex-direction: column; padding: 6px 0 5px; }
.vscroll svg { width: 10px; height: 6px; }
.hscroll { padding: 0 5px; border-top: 1px solid #fff; }
.hscroll svg { width: 6px; height: 10px; }
.view > div path { fill: none; stroke: #555; stroke-width: 1.900; }
.thumb { background: #cdcdcd; }
.vscroll .thumb { width: 15px; height: 22px; margin-top: 56px; }
.hscroll .thumb { width: 162px; height: 15px; margin: -1px 0 0 154px; }

.manager { border-left: 4px solid #dcdcdc; background: linear-gradient(#a0a0a0, #a0a0a0) 0 0 / 1px 100% no-repeat; border-bottom: 1px solid #a0a0a0; }
.manager h2 { height: 17px; margin-left: 1px; padding-left: 2px; font: 12px/15px "Liberation Sans", sans-serif; letter-spacing: -.45px; background: linear-gradient(#b8b8b8, #dadada); }
.tabs { display: flex; align-items: flex-end; height: 27px; margin-left: 1px; padding: 0 0 2px 5px; border-top: 1px solid #a0a0a0; border-bottom: 1px solid #a0a0a0; background: linear-gradient(#bdbdbd, #f8f8f8); }
.tab { height: 20px; padding: 2px 7px; border: 1px solid #aaa; border-bottom: 0; border-radius: 3px 3px 0 0; background: linear-gradient(#eee 50%, #ddd 50%); }
.tab.active { height: 21px; background: #fff; width: 49px; }
.manager ul { padding: 2px 0 0 8px; list-style: none; }
.manager li { display: flex; align-items: center; height: 16px; padding-left: 7px; letter-spacing: -.47px; }
.manager li.current { padding-left: 0; }
.current::before { content: ""; width: 0; margin-right: 2px; border: 4px solid transparent; border-left: 5px solid #4040ff; border-right: 0; }
.manager b { width: 14px; height: 11px; margin-right: 1px; border: 1px solid #111; }
.manager li i { width: 13px; height: 13px; margin-right: 3px; border: 1px solid #333; background: #fff; }
.manager li svg { display: block; width: 11px; height: 11px; fill: none; stroke: #333; stroke-width: 1.200; }
.red { background: #840000; } .green { background: #008400; } .purple { background: #840084; } .navy { background: #000084; }
.cyan { background: #00c2c2; } .teal { background: #008484; } .olive { background: #848400; } .silver { background: #c2c2c2; }
.yellow { background: #c2c200; } .magenta { background: #c200c2; } .gray { background: #848484; }

.messages { display: grid; grid-template-columns: 54px 50px 113px 63px 53px 100px; height: 31px; padding-left: 4px; border-bottom: 1px solid #d7d7d7; }
.status { display: grid; grid-template-columns: 861px 65px 173px 261px 54px 1fr; height: 22px; line-height: 23px; }
.status span { padding-left: 4px; border-right: 1px solid #d7d7d7; }
.status span:nth-child(3) { padding-left: 5px; }
.status span:last-child { border: 0; }

.taskbar { display: flex; height: 39px; border-top: 1px solid #10181f; box-shadow: inset 0 1px #6c7780; background: linear-gradient(90deg, #202d39, #222c35 50%, #1d232b 75%, #272e35 82%, #1d262e); }
.start { width: 40px; height: 39px; }
.pin { width: 34px; height: 32px; margin: 4px 0 0 25px; }
.pin.ie { width: 32px; height: 32px; margin: 2px 16px 0 30px; }
.task { display: grid; place-items: center; width: 59px; margin-right: 3px; border: 1px solid #8b9197; border-radius: 3px 3px 0 0; background: linear-gradient(155deg, #9a9ea2, #5b6168 45%, #333b44 46%, #4c545c); }
.task svg { width: 32px; height: 32px; }
.task.last { width: 54px; margin-right: 0; }
.sliver { width: 5px; border: solid #8b9197; border-width: 1px 1px 0 0; }
.tray { display: flex; margin-left: auto; color: #fff; }
.tray svg { width: 110px; height: 20px; margin: 10px 11px 0 0; }
.tray p { width: 61px; padding-top: 3px; text-align: center; line-height: 17px; letter-spacing: -.42px; }
.stray { width: 42px; height: 16px; overflow: hidden; padding-left: 1px; line-height: 15px; letter-spacing: -.85px; background: linear-gradient(#000, #000) 7px 0 / 1px 100% no-repeat; }

.dialog { position: absolute; left: 576px; top: 255px; width: 434px; height: 332px; padding: 0 5px; background: #f0f0f0; outline: 1px solid #181818; letter-spacing: -.45px; }
.dialog header { display: flex; align-items: center; justify-content: space-between; height: 30px; margin: 0 -5px; padding: 0 10px 2px 8px; background: #fff; }
.dialog header svg { width: 10px; height: 10px; }
.row { display: flex; align-items: center; height: 23px; }
.r-file { height: 24px; margin-top: 6px; }
.r-file label { width: 26px; padding-bottom: 1px; }
.field { height: 23px; padding: 0 5px; border: 1px solid #7a7a7a; background: #fff; line-height: 20px; letter-spacing: -.5px; }
.focus { width: 300px; margin-right: 6px; padding: 2px 4px 0 5px; border-color: #0078d7; }
mark { display: flex; justify-content: flex-end; width: 289px; height: 16px; overflow: hidden; background: #0078d7; border-right: 1px solid #f08030; color: #fff; line-height: 14px; letter-spacing: -.58px; }
button { width: 86px; height: 24px; padding: 0 0 2px; border: 1px solid #adadad; background: #e1e1e1; font: inherit; letter-spacing: inherit; }
.ok { border: 2px solid #0078d7; }
hr { height: 2px; margin: 11px 0 5px; border: 0; border-top: 1px solid #a0a0a0; background: #fff; }
h3 { height: 16px; font: bold 12.500px/16px "Liberation Sans", sans-serif; letter-spacing: -.2px; }
.r-inter { height: 18px; margin: 9px 0 8px; }
.r-inter span { padding-bottom: 2px; letter-spacing: -.43px; }
.radio { width: 13px; height: 13px; margin: 0 3px 0 15px; border: 1px solid #333; border-radius: 50%; background: #fff; }
.radio.sel { background: radial-gradient(circle, #333 0 3.500px, #fff 4.200px); }
.at { width: 23px; }
.r-at label { width: 15px; }
.hot { width: 124px; border-color: #000; }
.r-at .y { width: 15px; margin-left: 10px; }
.yv { width: 110px; }
.r-at .u { width: 35px; margin-left: 10px; }
.row .gray { width: 51px; padding: 0 3px; }
.h2 { margin: 10px 0; }
.p2 { margin-bottom: 10px; }
.param label { width: 134px; margin-left: 15px; padding-bottom: 1px; }
.param .wide { padding-bottom: 0; letter-spacing: -.26px; }
.param .field, .param .combo { width: 208px; }
.param .gray { width: 62px; margin-left: 5px; }
.g { height: 22px; margin-top: 5px; }
.g .combo { height: 22px; padding-left: 6px; }
.g span { padding-bottom: 1px; }
.s { margin-top: 6px; }
.h3 { margin: 10px 0 11px; }
.actions { height: 24px; margin-left: 237px; gap: 10px; }
.grip { position: absolute; right: 3px; bottom: 2px; width: 8px; height: 8px; }
.tooltip { position: absolute; left: 88px; top: 148px; width: 210px; height: 20px; padding-left: 5px; border: 1px solid #767676; background: #fff; color: #575757; line-height: 18px; letter-spacing: -.3px; }

.t-net { font: bold 9px "Liberation Sans", sans-serif; fill: #fff; letter-spacing: 0; }
.t-pol { font: bold 14px "Liberation Sans", sans-serif; fill: #444; }
.it { font-style: italic; }
.t-unit { font: 15px "DejaVu Sans", sans-serif; fill: #444; stroke: #444; stroke-width: .4; letter-spacing: 0; }
.t-unit.mm { font-size: 13px; letter-spacing: -.5px; }
.t-cp { font: 600 15px "Open Sans", sans-serif; fill: #17e070; letter-spacing: 0; }
```
